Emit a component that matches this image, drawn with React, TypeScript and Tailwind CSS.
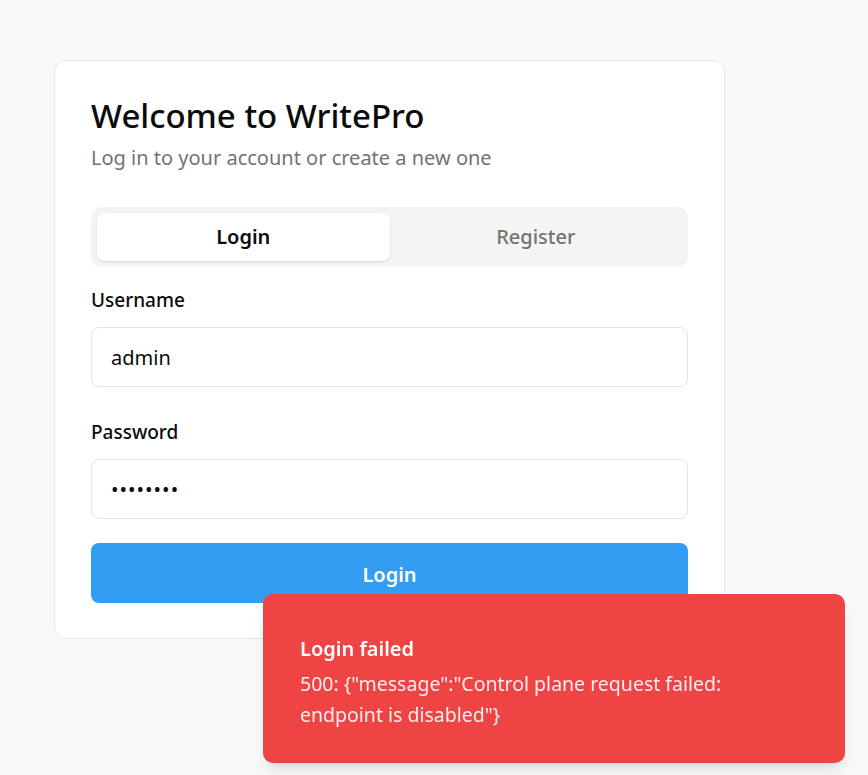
import { useState } from "react";

const App = () => {
  const [tab, setTab] = useState<"login" | "register">("login");
  const [username, setUsername] = useState("admin");
  const [password, setPassword] = useState("password");

  return (
    <div
      className="min-h-screen bg-[#f8f9fa] pt-[60px] pl-[54px]"
      style={{ fontFamily: '"Noto Sans", "Open Sans", sans-serif' }}
    >
      <div className="w-[671px] rounded-[12px] border border-[#e6e7e9] bg-white px-[36px] pt-[33px] pb-[35px]">
        <h1 className="text-[33px] leading-[44px] font-medium text-[#0b0b0b]">
          Welcome to WritePro
        </h1>
        <p className="mt-[6px] text-[20px] leading-[28px] text-[#737373]">
          Log in to your account or create a new one
        </p>

        <div className="mt-[35px] flex h-[60px] rounded-[10px] bg-[#f4f4f2] p-[6px]">
          <button
            onClick={() => setTab("login")}
            className={
              tab === "login"
                ? "flex-1 rounded-[8px] bg-white text-[20px] font-semibold text-[#0b0b0b] shadow-sm"
                : "flex-1 rounded-[8px] text-[20px] font-medium text-[#737373]"
            }
          >
            Login
          </button>
          <button
            onClick={() => setTab("register")}
            className={
              tab === "register"
                ? "flex-1 rounded-[8px] bg-white text-[20px] font-semibold text-[#0b0b0b] shadow-sm"
                : "flex-1 rounded-[8px] text-[20px] font-medium text-[#737373]"
            }
          >
            Register
          </button>
        </div>

        <label className="mt-[19px] block text-[19px] leading-[28px] font-medium text-[#0b0b0b]">
          Username
        </label>
        <input
          value={username}
          onChange={(e) => setUsername(e.target.value)}
          className="mt-[13px] block h-[60px] w-full rounded-[8px] border border-[#e4e4e4] bg-white px-[19px] text-[20px] text-[#0b0b0b] outline-none"
        />

        <label className="mt-[31px] block text-[19px] leading-[28px] font-medium text-[#0b0b0b]">
          Password
        </label>
        <input
          type="password"
          value={password}
          onChange={(e) => setPassword(e.target.value)}
          className="mt-[13px] block h-[60px] w-full rounded-[8px] border border-[#e4e4e4] bg-white px-[19px] text-[20px] tracking-[1px] text-[#0b0b0b] outline-none"
        />

        <button className="mt-[24px] block h-[60px] w-full rounded-[8px] bg-[#339df3] pt-[3px] text-[20px] font-semibold text-white">
          Login
        </button>
      </div>

      <div className="fixed right-[23px] bottom-[12px] w-[582px] rounded-[10px] bg-[#ef4444] px-[37px] pt-[41px] pb-[33px] text-white shadow-lg">
        <div className="text-[20px] leading-[28px] font-semibold">Login failed</div>
        <div className="mt-[5px] text-[19.5px] leading-[31px] text-white/90">
          500: {'{"message":"Control plane request failed:'}
          <br />
          {'endpoint is disabled"}'}
        </div>
      </div>
    </div>
  );
};

export default App;
